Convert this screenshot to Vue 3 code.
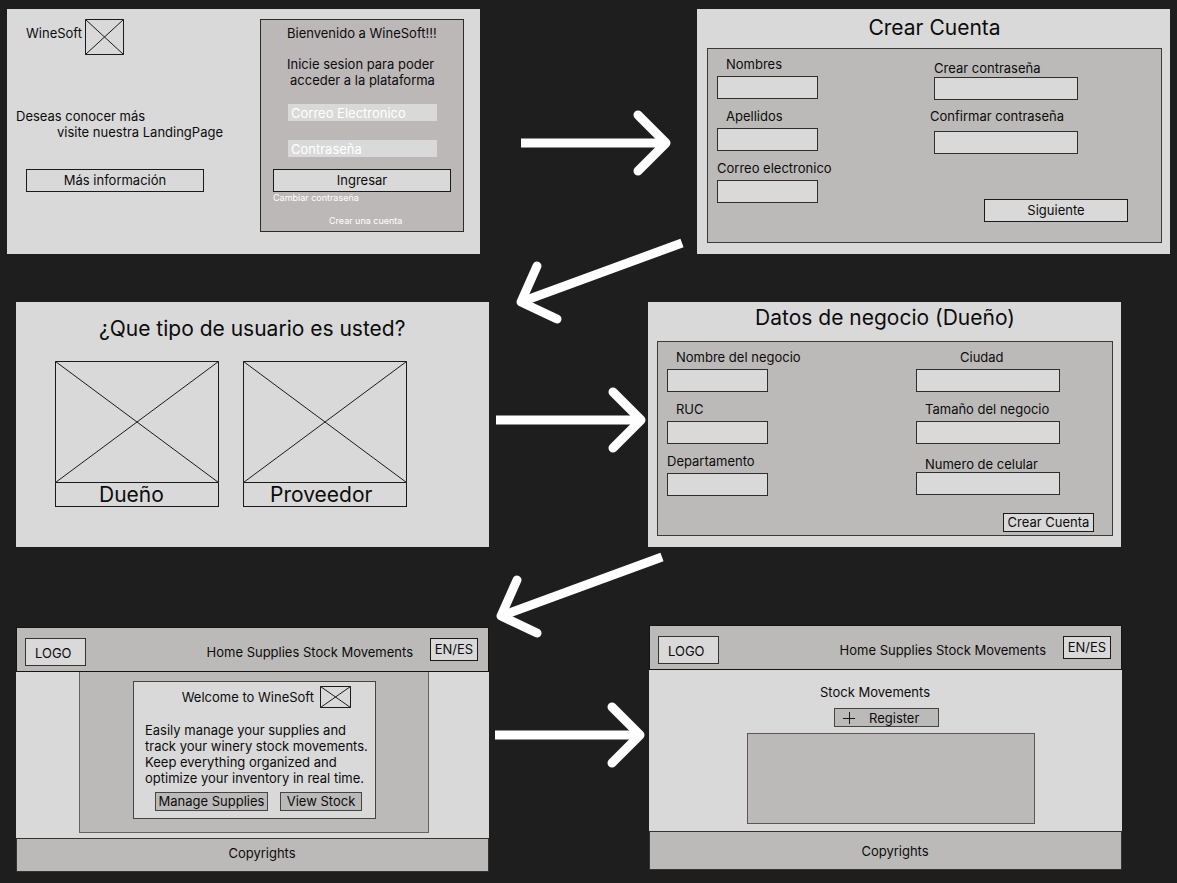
<script setup>
const ownerLeft = [
  { id: 'business-name', label: 'Nombre del negocio', indent: true },
  { id: 'ruc', label: 'RUC', indent: true },
  { id: 'department', label: 'Departamento', indent: false },
]
const accountLeft = [
  { id: 'first-names', label: 'Nombres', indent: true },
  { id: 'last-names', label: 'Apellidos', indent: true },
  { id: 'email', label: 'Correo electronico', indent: false },
]
const arrowsRight = ['to-account', 'to-business', 'to-stock']
const arrowsDown = ['to-user-type', 'to-home']
</script>

<template>
  <main class="canvas">
    <!-- Login -->
    <section class="frame login-frame">
      <div class="intro">
        <div class="brand">
          <span class="brand-name">WineSoft</span>
          <svg class="placeholder brand-logo" viewBox="0 0 39 36" aria-hidden="true">
            <path d="M.5 .5H38.5V35.5H.5ZL38.5 35.5M38.5 .5L.5 35.5" />
          </svg>
        </div>
        <p class="pitch">Deseas conocer más<br /><span class="pitch-second">visite nuestra LandingPage</span></p>
        <button class="btn more" type="button">Más información</button>
      </div>
      <form class="login" @submit.prevent>
        <p class="welcome">Bienvenido a WineSoft!!!</p>
        <p class="instructions">Inicie sesion para poder<br /><span class="instructions-second">acceder a la plataforma</span></p>
        <input class="login-input" type="email" placeholder="Correo Electronico" aria-label="Correo Electronico" />
        <input class="login-input password" type="password" placeholder="Contraseña" aria-label="Contraseña" />
        <button class="btn enter" type="submit">Ingresar</button>
        <a class="small-link" href="#">Cambiar contraseña</a>
        <a class="small-link create" href="#">Crear una cuenta</a>
      </form>
    </section>

    <!-- Create account -->
    <section class="frame account-frame">
      <h2 class="title">Crear Cuenta</h2>
      <form class="panel" @submit.prevent>
        <div class="column">
          <div v-for="f in accountLeft" :key="f.id" class="field">
            <label :for="f.id" :class="{ indent: f.indent }">{{ f.label }}</label>
            <input :id="f.id" class="box" type="text" />
          </div>
        </div>
        <div class="column passwords">
          <label class="nudge" for="password">Crear contraseña</label>
          <input id="password" class="box wide nudge" type="password" />
          <label class="confirm-label" for="confirm">Confirmar contraseña</label>
          <input id="confirm" class="box wide nudge confirm" type="password" />
          <button class="btn next" type="submit">Siguiente</button>
        </div>
      </form>
    </section>

    <!-- User type -->
    <section class="frame type-frame">
      <h2 class="type-title">¿Que tipo de usuario es usted?</h2>
      <div class="cards">
        <button class="card" type="button">
          <svg class="placeholder card-image" viewBox="0 0 164 122" aria-hidden="true">
            <path d="M.5 .5H163.5V121.5H.5ZL163.5 121.5M163.5 .5L.5 121.5" />
          </svg>
          <span class="caption owner">Dueño</span>
        </button>
        <button class="card" type="button">
          <svg class="placeholder card-image" viewBox="0 0 164 122" aria-hidden="true">
            <path d="M.5 .5H163.5V121.5H.5ZL163.5 121.5M163.5 .5L.5 121.5" />
          </svg>
          <span class="caption supplier">Proveedor</span>
        </button>
      </div>
    </section>

    <!-- Business data -->
    <section class="frame business-frame">
      <h2 class="title">Datos de negocio (Dueño)</h2>
      <form class="panel" @submit.prevent>
        <div class="column">
          <div v-for="f in ownerLeft" :key="f.id" class="field">
            <label :for="f.id" :class="{ indent: f.indent }">{{ f.label }}</label>
            <input :id="f.id" class="box" type="text" />
          </div>
        </div>
        <div class="column details">
          <div class="field">
            <label class="city" for="city">Ciudad</label>
            <input id="city" class="box wide" type="text" />
          </div>
          <div class="field">
            <label class="indent" for="size">Tamaño del negocio</label>
            <input id="size" class="box wide" type="text" />
          </div>
          <div class="field phone">
            <label class="indent" for="phone">Numero de celular</label>
            <input id="phone" class="box wide" type="tel" />
          </div>
          <button class="btn create-account" type="submit">Crear Cuenta</button>
        </div>
      </form>
    </section>

    <!-- Home -->
    <section class="frame site home-frame">
      <header class="bar">
        <a class="logo" href="#">LOGO</a>
        <nav class="nav"><a href="#">Home</a> <a href="#">Supplies</a> <a href="#">Stock Movements</a></nav>
        <button class="btn lang" type="button">EN/ES</button>
      </header>
      <div class="site-body">
        <div class="hero">
          <div class="hero-card">
            <div class="hero-head">
              <span>Welcome to WineSoft</span>
              <svg class="placeholder hero-logo" viewBox="0 0 31 22" aria-hidden="true">
                <path d="M.5 .5H30.5V21.5H.5ZL30.5 21.5M30.5 .5L.5 21.5" />
              </svg>
            </div>
            <p class="hero-text">Easily manage your supplies and<br />track your winery stock movements.<br />Keep everything organized and<br />optimize your inventory in real time.</p>
            <div class="hero-actions">
              <button class="btn dark manage" type="button">Manage Supplies</button>
              <button class="btn dark view" type="button">View Stock</button>
            </div>
          </div>
        </div>
      </div>
      <footer class="foot">Copyrights</footer>
    </section>

    <!-- Stock movements -->
    <section class="frame site stock-frame">
      <header class="bar">
        <a class="logo" href="#">LOGO</a>
        <nav class="nav"><a href="#">Home</a> <a href="#">Supplies</a> <a href="#">Stock Movements</a></nav>
        <button class="btn lang" type="button">EN/ES</button>
      </header>
      <div class="site-body">
        <h3 class="stock-title">Stock Movements</h3>
        <button class="btn dark register" type="button">
          <svg class="plus" viewBox="0 0 12 12" aria-hidden="true"><path d="M0 6.5H12M6.5 0V12" /></svg>
          Register
        </button>
        <div class="stock-list"></div>
      </div>
      <footer class="foot">Copyrights</footer>
    </section>

    <!-- Flow arrows -->
    <svg v-for="a in arrowsRight" :key="a" class="arrow right" :class="a" viewBox="0 0 150 66" aria-hidden="true">
      <path d="M0 33H145" />
      <path class="head" d="M117 5L145 33L117 61" />
    </svg>
    <svg v-for="a in arrowsDown" :key="a" class="arrow down" :class="a" viewBox="0 0 172 88" aria-hidden="true">
      <path d="M168 5L7 64" />
      <path class="head" d="M23 28L7 64L43 81" />
    </svg>
  </main>
</template>

<style>
body {
  margin: 0;
  background: #1e1e1e;
}
</style>

<style scoped>
.canvas,
.canvas * {
  box-sizing: border-box;
}
.canvas {
  position: relative;
  min-height: 100vh;
  background: #1e1e1e;
  color: #0c0c0c;
  font: 13px/16px Inter, "Liberation Sans", sans-serif;
}
p,
h2,
h3 {
  margin: 0;
  font-weight: 400;
}
h3 {
  font-size: 13px;
}
a {
  color: inherit;
  text-decoration: none;
}
button,
input {
  margin: 0;
  padding: 0;
  border-radius: 0;
  color: inherit;
  font: inherit;
}
svg {
  display: block;
  flex: none;
}
.placeholder {
  fill: none;
  stroke: #1a1a1a;
}

/* Frames placed on the free canvas */
.frame {
  position: absolute;
  width: 473px;
  min-height: 245px;
  background: #d9d9d9;
}
.login-frame { left: 7px; top: 9px; }
.account-frame { left: 697px; top: 9px; }
.type-frame { left: 16px; top: 302px; }
.business-frame { left: 648px; top: 302px; }
.home-frame { left: 16px; top: 627px; }
.stock-frame { left: 649px; top: 625px; }

.btn {
  display: block;
  height: 23px;
  padding-bottom: 1px;
  border: 1px solid #1a1a1a;
  background: #d9d9d9;
  text-align: center;
  white-space: nowrap;
}
.dark {
  height: 19px;
  border-color: #444;
  background: #bbbab8;
}

/* Login */
.login-frame {
  display: flex;
  align-items: flex-start;
  padding: 10px 16px 0 9px;
}
.intro {
  flex: 1;
}
.brand {
  display: flex;
  align-items: flex-start;
  padding-left: 10px;
}
.brand-name {
  width: 59px;
  padding-top: 6px;
}
.brand-logo {
  width: 39px;
  height: 36px;
}
.pitch {
  margin-top: 53px;
}
.pitch-second {
  padding-left: 41px;
}
.more {
  width: 178px;
  margin: 29px 0 0 10px;
}
.login {
  width: 204px;
  padding: 5px 12px;
  border: 1px solid #2c2a2a;
  background: #bcb8b8;
}
.welcome,
.instructions {
  padding-left: 14px;
  white-space: nowrap;
}
.instructions {
  margin-top: 15px;
}
.instructions-second {
  padding-left: 3px;
}
.login-input {
  display: block;
  width: 149px;
  height: 17px;
  margin: 16px 0 0 15px;
  padding-left: 3px;
  border: 0;
  background: #d9d9d9;
}
.login-input::placeholder {
  color: #fff;
  opacity: 1;
}
.password {
  margin-top: 19px;
}
.enter {
  width: 178px;
  margin-top: 12px;
}
.small-link {
  display: block;
  color: #fff;
  font-size: 9px;
  line-height: 11px;
}
.create {
  margin-top: 12px;
  padding-left: 56px;
}

/* Forms */
.title {
  font-size: 21px;
  line-height: 26px;
  text-align: center;
}
.account-frame {
  padding: 6px 8px 10px 10px;
}
.business-frame {
  padding: 3px 8px 10px 9px;
}
.panel {
  display: flex;
  align-items: flex-start;
  justify-content: space-between;
  min-height: 195px;
  margin-top: 7px;
  padding: 7px 33px 0 9px;
  border: 1px solid #3a3a3a;
  background: #bbbab8;
}
.business-frame .panel {
  margin-top: 10px;
  padding-right: 18px;
}
.column {
  display: flex;
  flex-direction: column;
  align-items: flex-start;
}
.field {
  display: flex;
  flex-direction: column;
  gap: 4px;
  margin-bottom: 9px;
}
.indent {
  padding-left: 9px;
}
.box {
  width: 101px;
  height: 23px;
  border: 1px solid #2e2e2e;
  background: #d9d9d9;
}
.wide {
  width: 144px;
}
.passwords {
  padding-top: 4px;
}
.nudge {
  margin-left: 4px;
}
.passwords .wide {
  margin-top: 1px;
}
.confirm-label {
  margin-top: 8px;
}
.passwords .confirm {
  margin-top: 7px;
}
.next {
  width: 144px;
  margin: 45px 0 0 54px;
}
.city {
  padding-left: 44px;
}
.phone {
  gap: 0;
  margin: 3px 0 18px;
}
.create-account {
  align-self: flex-end;
  width: 91px;
  height: 19px;
}
.details {
  width: 178px;
}

/* User type */
.type-frame {
  padding: 14px 39px 0;
}
.type-title {
  padding-left: 44px;
  font-size: 21px;
  line-height: 26px;
  white-space: nowrap;
}
.cards {
  display: flex;
  gap: 24px;
  margin-top: 19px;
}
.card {
  width: 164px;
  border: 0;
  background: none;
  text-align: left;
}
.card-image {
  width: 164px;
  height: 122px;
}
.caption {
  display: block;
  height: 24px;
  border: 1px solid #1a1a1a;
  border-top: 0;
  font-size: 21px;
  line-height: 24px;
}
.owner {
  padding-left: 43px;
}
.supplier {
  padding-left: 26px;
}

/* Site frames */
.site {
  display: flex;
  flex-direction: column;
}
.bar {
  display: flex;
  align-items: flex-start;
  height: 45px;
  padding: 10px 10px 0 8px;
  border: 1px solid #141414;
  background: #bbbab8;
}
.logo {
  width: 61px;
  height: 28px;
  padding-left: 9px;
  border: 1px solid #333;
  background: #d9d9d9;
  line-height: 28px;
}
.nav {
  margin-left: auto;
  padding-top: 6px;
}
.lang {
  width: 48px;
  margin-left: 17px;
}
.site-body {
  flex: 1;
}
.foot {
  height: 34px;
  padding: 6px 0 0 19px;
  border: 1px solid #333;
  background: #bbbab8;
  text-align: center;
}
.stock-frame .foot {
  height: 39px;
  padding-top: 11px;
}
.hero {
  width: 350px;
  height: 161px;
  margin-left: 63px;
  padding: 9px 52px 0 53px;
  border: 1px solid #666262;
  border-top: 0;
  background: #bbbab8;
}
.hero-card {
  height: 138px;
  padding: 4px 4px 0 11px;
  border: 1px solid #444;
  background: #d9d9d9;
}
.hero-head {
  display: flex;
  align-items: center;
  justify-content: flex-end;
  gap: 6px;
  padding-right: 20px;
}
.hero-logo {
  width: 31px;
  height: 22px;
}
.hero-text {
  margin-top: 14px;
  white-space: nowrap;
}
.hero-actions {
  display: flex;
  gap: 12px;
  margin-top: 6px;
  padding-left: 10px;
}
.manage {
  width: 113px;
}
.view {
  width: 82px;
}
.stock-title {
  padding: 14px 0 0 171px;
}
.register {
  display: flex;
  align-items: center;
  gap: 14px;
  width: 105px;
  margin: 8px 0 0 185px;
  padding: 0 0 0 8px;
}
.plus {
  width: 12px;
  height: 12px;
  fill: none;
  stroke: #1a1a1a;
}
.stock-list {
  height: 91px;
  margin: 6px 87px 7px 98px;
  border: 1px solid #5c5656;
  background: #bbbab8;
}

/* Arrows */
.arrow {
  position: absolute;
  fill: none;
  stroke: #fff;
  stroke-width: 9;
}
.head {
  stroke-linecap: round;
  stroke-linejoin: round;
}
.right {
  width: 150px;
  height: 66px;
}
.down {
  width: 172px;
  height: 88px;
}
.to-account { left: 521px; top: 110px; }
.to-business { left: 496px; top: 387px; }
.to-stock { left: 495px; top: 702px; }
.to-user-type { left: 514px; top: 238px; }
.to-home { left: 494px; top: 552px; }
</style>
